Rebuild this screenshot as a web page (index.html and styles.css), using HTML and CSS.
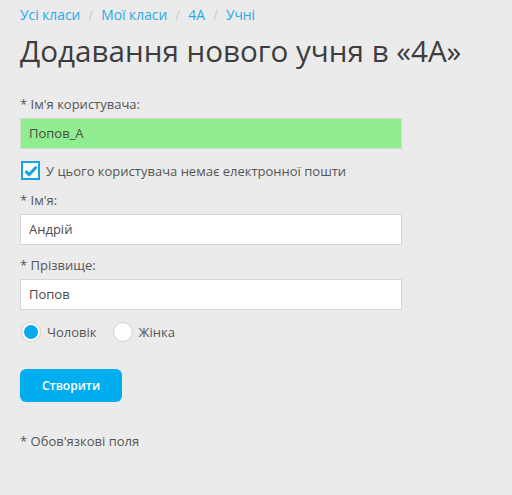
FILE: index.html
```html
<!DOCTYPE html>
<html lang="uk">
<head>
<meta charset="utf-8">
<link rel="stylesheet" href="styles.css">
</head>
<body>
<div class="page">
  <nav class="crumbs">
    <a href="#">Усі класи</a><span class="sep">/</span>
    <a href="#">Мої класи</a><span class="sep">/</span>
    <a href="#">4А</a><span class="sep">/</span>
    <a href="#">Учні</a>
  </nav>
  <h1 class="title">Додавання нового учня в «4А»</h1>
  <form class="form">
    <div class="field">
      <label class="label">* Ім'я користувача:</label>
      <div class="input input-ok">Попов_А</div>
    </div>
    <div class="check-row">
      <span class="checkbox">
        <svg width="14" height="12" viewBox="0 0 14 12"><path d="M1.5 6.2 L5.2 9.6 L12.5 1.8" fill="none" stroke="#14a4e6" stroke-width="3"/></svg>
      </span>
      <span class="check-text">У цього користувача немає електронної пошти</span>
    </div>
    <div class="field">
      <label class="label">* Ім'я:</label>
      <div class="input">Андрій</div>
    </div>
    <div class="field">
      <label class="label">* Прізвище:</label>
      <div class="input">Попов</div>
    </div>
    <div class="radios">
      <span class="radio-item"><span class="radio on"></span>Чоловік</span>
      <span class="radio-item"><span class="radio"></span>Жінка</span>
    </div>
    <button type="button" class="btn">Створити</button>
    <p class="note">* Обов'язкові поля</p>
  </form>
</div>
</body>
</html>
```
FILE: styles.css
```css
html, body {
  margin: 0;
  padding: 0;
  background: #ebebeb;
}
body {
  font-family: "Open Sans", "Noto Sans", sans-serif;
  color: #555;
}
.page {
  padding: 4px 20px 0 20px;
}
.crumbs {
  font-size: 13.8px;
  line-height: 22px;
  display: flex;
  align-items: center;
}
.crumbs a {
  color: #2aa9e6;
  text-decoration: none;
}
.crumbs .sep {
  color: #ccc;
  margin: 0 8px;
}
.title {
  font-weight: 400;
  font-size: 29.6px;
  line-height: 44px;
  color: #3d3d3d;
  margin: 3px 0 0 0;
  white-space: nowrap;
}
.form {
  margin-top: 22px;
  width: 382px;
}
.field {
  display: flex;
  flex-direction: column;
}
.label {
  font-size: 13px;
  line-height: 18px;
  color: #555;
  margin-bottom: 5px;
}
.input {
  box-sizing: border-box;
  height: 31px;
  border: 1px solid #d6d6d6;
  background: #fff;
  font-size: 13px;
  line-height: 29px;
  padding: 0 8px;
  color: #4a4a4a;
}
.input-ok {
  background: #90ee90;
  border-color: #d3dccf;
}
.check-row {
  display: flex;
  align-items: center;
  margin: 12px 0 11px 1px;
}
.checkbox {
  box-sizing: border-box;
  width: 19px;
  height: 19px;
  border: 2px solid #14a4e6;
  background: #fff;
  display: flex;
  align-items: center;
  justify-content: center;
  margin-right: 6px;
}
.check-text {
  font-size: 13px;
  color: #555;
}
.field + .field {
  margin-top: 11px;
}
.radios {
  display: flex;
  align-items: center;
  margin: 12px 0 0 1px;
  font-size: 13px;
}
.radio-item {
  display: flex;
  align-items: center;
  margin-right: 16px;
}
.radio {
  box-sizing: border-box;
  width: 20px;
  height: 20px;
  border-radius: 50%;
  border: 1px solid #d0d0d0;
  background: #fff;
  margin-right: 6px;
  position: relative;
}
.radio.on::after {
  content: "";
  position: absolute;
  left: 2px;
  top: 2px;
  width: 14px;
  height: 14px;
  border-radius: 50%;
  background: #0aa9ed;
}
.btn {
  display: block;
  margin-top: 27px;
  width: 102px;
  height: 33px;
  border: none;
  border-radius: 6px;
  background: #00aeef;
  color: #fff;
  font-family: "Open Sans", sans-serif;
  font-weight: 600;
  font-size: 12px;
  padding: 0;
}
.note {
  margin: 30px 0 0 0;
  font-size: 13px;
  color: #555;
}
```
